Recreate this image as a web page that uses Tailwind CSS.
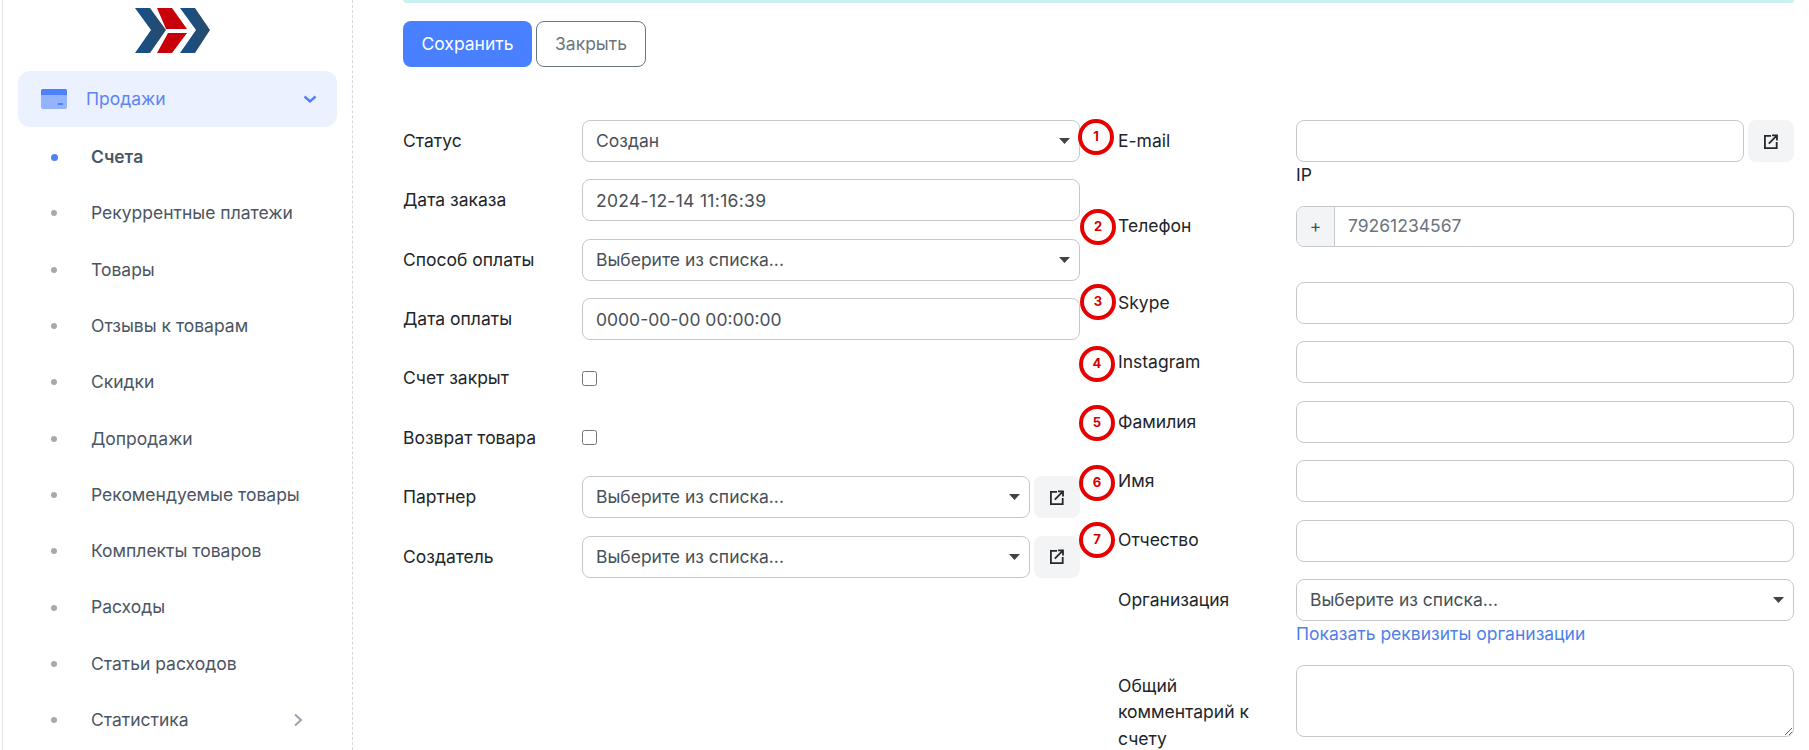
<!DOCTYPE html>
<html lang="ru">
<head>
    <meta charset="UTF-8">
    <title>Счет</title>
    <script src="https://cdn.jsdelivr.net/npm/@tailwindcss/browser@4"></script>
</head>
<body class="bg-white font-['Inter',sans-serif] text-[17.5px] text-[#212529] h-[750px] overflow-hidden relative">

<div class="flex h-[750px]">
    <!-- sidebar -->
    <aside class="w-[351px] shrink-0 h-full ml-[2px] border-l border-l-[#e4e4e4] border-r border-r-[#d5d8dc] border-dashed [border-left-style:solid] overflow-hidden">
        <div class="h-[71px] pl-[132px] pt-[8px]">
            <svg width="76" height="46" viewBox="0 0 76 46">
                <defs>
                    <linearGradient id="blue1" x1="0" x2="1" y1="0" y2="0">
                        <stop offset="0" stop-color="#12518f"></stop>
                        <stop offset="1" stop-color="#2b4a66"></stop>
                    </linearGradient>
                </defs>
                <polygon points="0,0 15,0 31,22 15,45 0,45 16,22" fill="url(#blue1)"></polygon>
                <polygon points="22,0 37,0 52,21 31,21" fill="#c8000a"></polygon>
                <polygon points="33,25 52,25 37,45 22,45" fill="#c8000a"></polygon>
                <polygon points="45,0 60,0 75,22 60,45 45,45 61,22" fill="url(#blue1)"></polygon>
            </svg>
        </div>
        <nav class="text-[#4b5563]">
            <div class="mx-[15px] h-[56px] rounded-[12px] bg-[#ebf1fe] flex items-center pl-[23px] pr-[20px] text-[#5c85f2]">
                <svg width="26" height="20" viewBox="0 0 26 20" class="mr-[19px]">
                    <rect width="26" height="20" rx="2" fill="#94b3fd"></rect>
                    <path d="M0 2a2 2 0 0 1 2-2h22a2 2 0 0 1 2 2v4H0z" fill="#4f80fb"></path>
                    <rect x="17" y="14" width="5" height="2" fill="#4f80fb"></rect>
                </svg>
                <span>Продажи</span>
                <svg width="14" height="10" viewBox="0 0 14 10" class="ml-auto" fill="none" stroke="#4f80fb" stroke-width="2.4">
                    <path d="M1.5 2.5 7 7.5l5.5-5"></path>
                </svg>
            </div>
            <ul class="mt-[2px]">
                <li class="h-[56.3px] flex items-center pl-[48px]"><span class="size-[7px] rounded-full bg-[#4f80fb] mr-[33px]"></span><span class="font-semibold">Счета</span></li>
                <li class="h-[56.3px] flex items-center pl-[48px]"><span class="size-[6px] rounded-full bg-[#a5a9b0] mr-[34px]"></span>Рекуррентные платежи</li>
                <li class="h-[56.3px] flex items-center pl-[48px]"><span class="size-[6px] rounded-full bg-[#a5a9b0] mr-[34px]"></span>Товары</li>
                <li class="h-[56.3px] flex items-center pl-[48px]"><span class="size-[6px] rounded-full bg-[#a5a9b0] mr-[34px]"></span>Отзывы к товарам</li>
                <li class="h-[56.3px] flex items-center pl-[48px]"><span class="size-[6px] rounded-full bg-[#a5a9b0] mr-[34px]"></span>Скидки</li>
                <li class="h-[56.3px] flex items-center pl-[48px]"><span class="size-[6px] rounded-full bg-[#a5a9b0] mr-[34px]"></span>Допродажи</li>
                <li class="h-[56.3px] flex items-center pl-[48px]"><span class="size-[6px] rounded-full bg-[#a5a9b0] mr-[34px]"></span>Рекомендуемые товары</li>
                <li class="h-[56.3px] flex items-center pl-[48px]"><span class="size-[6px] rounded-full bg-[#a5a9b0] mr-[34px]"></span>Комплекты товаров</li>
                <li class="h-[56.3px] flex items-center pl-[48px]"><span class="size-[6px] rounded-full bg-[#a5a9b0] mr-[34px]"></span>Расходы</li>
                <li class="h-[56.3px] flex items-center pl-[48px]"><span class="size-[6px] rounded-full bg-[#a5a9b0] mr-[34px]"></span>Статьи расходов</li>
                <li class="h-[56.3px] flex items-center pl-[48px] pr-[49px]"><span class="size-[6px] rounded-full bg-[#a5a9b0] mr-[34px]"></span>Статистика
                    <svg width="10" height="14" viewBox="0 0 10 14" class="ml-auto" fill="none" stroke="#9ca3af" stroke-width="2"><path d="M2 1.5 8 7l-6 5.5"></path></svg>
                </li>
            </ul>
        </nav>
    </aside>

    <!-- content -->
    <main class="flex-1 pl-[50px] pr-[15px]">
        <div class="h-[3px] bg-[#c9f1f1] rounded-b-md"></div>
        <div class="flex gap-[4px] mt-[18px]">
            <button class="h-[46px] w-[129px] rounded-[8px] bg-[#4880ff] text-white">Сохранить</button>
            <button class="h-[46px] w-[110px] rounded-[8px] border border-[#6c757d] text-[#6c757d]">Закрыть</button>
        </div>

        <div class="flex mt-[53px]">
            <!-- left column -->
            <div class="w-[677px] shrink-0">
                <div class="flex items-center h-[42px] mb-[17.4px]">
                    <label class="w-[179px] shrink-0">Статус</label>
                    <div class="relative w-[498px]">
                        <select class="appearance-none w-full h-[42px] px-[13px] border border-[#c4c8cc] rounded-[8px] text-[#495057] bg-white"><option>Создан</option></select>
                        <svg width="11" height="6" viewBox="0 0 11 6" class="absolute right-[10px] top-[18px]"><path d="M0 0h11L5.5 6z" fill="#3f4448"></path></svg>
                    </div>
                </div>
                <div class="flex items-center h-[42px] mb-[17.4px]">
                    <label class="w-[179px] shrink-0">Дата заказа</label>
                    <input value="2024-12-14 11:16:39" class="w-[498px] h-[42px] px-[13px] border border-[#c4c8cc] rounded-[8px] text-[#495057] tracking-[0.3px]">
                </div>
                <div class="flex items-center h-[42px] mb-[17.4px]">
                    <label class="w-[179px] shrink-0">Способ оплаты</label>
                    <div class="relative w-[498px]">
                        <select class="appearance-none w-full h-[42px] px-[13px] border border-[#c4c8cc] rounded-[8px] text-[#495057] bg-white"><option>Выберите из списка...</option></select>
                        <svg width="11" height="6" viewBox="0 0 11 6" class="absolute right-[10px] top-[18px]"><path d="M0 0h11L5.5 6z" fill="#3f4448"></path></svg>
                    </div>
                </div>
                <div class="flex items-center h-[42px] mb-[17.4px]">
                    <label class="w-[179px] shrink-0">Дата оплаты</label>
                    <input value="0000-00-00 00:00:00" class="w-[498px] h-[42px] px-[13px] border border-[#c4c8cc] rounded-[8px] text-[#495057]">
                </div>
                <div class="flex items-center h-[42px] mb-[17.4px]">
                    <label class="w-[179px] shrink-0">Счет закрыт</label>
                    <input type="checkbox" class="size-[15px] m-0">
                </div>
                <div class="flex items-center h-[42px] mb-[17.4px]">
                    <label class="w-[179px] shrink-0">Возврат товара</label>
                    <input type="checkbox" class="size-[15px] m-0">
                </div>
                <div class="flex items-center h-[42px] mb-[17.4px]">
                    <label class="w-[179px] shrink-0">Партнер</label>
                    <div class="relative w-[448px]">
                        <select class="appearance-none w-full h-[42px] px-[13px] border border-[#c4c8cc] rounded-[8px] text-[#495057] bg-white"><option>Выберите из списка...</option></select>
                        <svg width="11" height="6" viewBox="0 0 11 6" class="absolute right-[10px] top-[18px]"><path d="M0 0h11L5.5 6z" fill="#3f4448"></path></svg>
                    </div>
                    <button class="ml-[4px] w-[46px] h-[42px] rounded-[8px] bg-[#f3f4f6] flex items-center justify-center">
                        <svg width="14" height="15" viewBox="0 0 14 15" fill="none" stroke="#26292c" stroke-width="1.8"><path d="M7 1.9H.9v12.2h11.8V8M4.8 9.6 12 2.4M8 1.4h5v5"></path></svg>
                    </button>
                </div>
                <div class="flex items-center h-[42px]">
                    <label class="w-[179px] shrink-0">Создатель</label>
                    <div class="relative w-[448px]">
                        <select class="appearance-none w-full h-[42px] px-[13px] border border-[#c4c8cc] rounded-[8px] text-[#495057] bg-white"><option>Выберите из списка...</option></select>
                        <svg width="11" height="6" viewBox="0 0 11 6" class="absolute right-[10px] top-[18px]"><path d="M0 0h11L5.5 6z" fill="#3f4448"></path></svg>
                    </div>
                    <button class="ml-[4px] w-[46px] h-[42px] rounded-[8px] bg-[#f3f4f6] flex items-center justify-center">
                        <svg width="14" height="15" viewBox="0 0 14 15" fill="none" stroke="#26292c" stroke-width="1.8"><path d="M7 1.9H.9v12.2h11.8V8M4.8 9.6 12 2.4M8 1.4h5v5"></path></svg>
                    </button>
                </div>
            </div>

            <!-- right column -->
            <div class="flex-1 ml-[38px]">
                <div class="flex items-center h-[42px]">
                    <label class="w-[178px] shrink-0">E-mail</label>
                    <input class="w-[448px] h-[42px] border border-[#c4c8cc] rounded-[8px]">
                    <button class="ml-[4px] w-[46px] h-[42px] rounded-[8px] bg-[#f3f4f6] flex items-center justify-center">
                        <svg width="14" height="15" viewBox="0 0 14 15" fill="none" stroke="#26292c" stroke-width="1.8"><path d="M7 1.9H.9v12.2h11.8V8M4.8 9.6 12 2.4M8 1.4h5v5"></path></svg>
                    </button>
                </div>
                <div class="pl-[178px] h-[26px] leading-[26px] mb-[18px]">IP</div>

                <div class="flex items-center h-[41px] mb-[35px]">
                    <label class="w-[178px] shrink-0">Телефон</label>
                    <div class="flex-1 flex h-[41px] border border-[#c4c8cc] rounded-[8px] overflow-hidden">
                        <span class="w-[38px] bg-[#f3f4f6] border-r border-[#c4c8cc] flex items-center justify-center text-[#495057]">+</span>
                        <input placeholder="79261234567" class="flex-1 px-[13px] placeholder:text-[#6c757d]">
                    </div>
                </div>

                <div class="flex items-center h-[42px] mb-[17.4px]">
                    <label class="w-[178px] shrink-0">Skype</label>
                    <input class="flex-1 h-[42px] border border-[#c4c8cc] rounded-[8px]">
                </div>
                <div class="flex items-center h-[42px] mb-[17.4px]">
                    <label class="w-[178px] shrink-0">Instagram</label>
                    <input class="flex-1 h-[42px] border border-[#c4c8cc] rounded-[8px]">
                </div>
                <div class="flex items-center h-[42px] mb-[17.4px]">
                    <label class="w-[178px] shrink-0">Фамилия</label>
                    <input class="flex-1 h-[42px] border border-[#c4c8cc] rounded-[8px]">
                </div>
                <div class="flex items-center h-[42px] mb-[17.4px]">
                    <label class="w-[178px] shrink-0">Имя</label>
                    <input class="flex-1 h-[42px] border border-[#c4c8cc] rounded-[8px]">
                </div>
                <div class="flex items-center h-[42px] mb-[17.4px]">
                    <label class="w-[178px] shrink-0">Отчество</label>
                    <input class="flex-1 h-[42px] border border-[#c4c8cc] rounded-[8px]">
                </div>
                <div class="flex items-center h-[42px]">
                    <label class="w-[178px] shrink-0">Организация</label>
                    <div class="relative flex-1">
                        <select class="appearance-none w-full h-[42px] px-[13px] border border-[#c4c8cc] rounded-[8px] text-[#495057] bg-white"><option>Выберите из списка...</option></select>
                        <svg width="11" height="6" viewBox="0 0 11 6" class="absolute right-[10px] top-[18px]"><path d="M0 0h11L5.5 6z" fill="#3f4448"></path></svg>
                    </div>
                </div>
                <div class="pl-[178px] h-[26px] leading-[26px] mb-[18px] text-[#4f7fe8]">Показать реквизиты организации</div>
                <div class="flex">
                    <label class="w-[178px] shrink-0 pr-[20px] pt-[8px] leading-[26.3px]">Общий комментарий к счету</label>
                    <textarea class="flex-1 h-[72px] border border-[#c4c8cc] rounded-[8px]"></textarea>
                </div>
            </div>
        </div>
    </main>
</div>

<!-- red annotation circles drawn over the form -->
<div class="absolute left-[1078px] top-[119px] size-[36px] rounded-full border-[4px] border-[#e60000] flex items-center justify-center text-[13px] font-bold text-[#d40000]">1</div>
<div class="absolute left-[1080px] top-[209px] size-[36px] rounded-full border-[4px] border-[#e60000] flex items-center justify-center text-[13px] font-bold text-[#d40000]">2</div>
<div class="absolute left-[1080px] top-[284px] size-[36px] rounded-full border-[4px] border-[#e60000] flex items-center justify-center text-[13px] font-bold text-[#d40000]">3</div>
<div class="absolute left-[1079px] top-[346px] size-[36px] rounded-full border-[4px] border-[#e60000] flex items-center justify-center text-[13px] font-bold text-[#d40000]">4</div>
<div class="absolute left-[1079px] top-[405px] size-[36px] rounded-full border-[4px] border-[#e60000] flex items-center justify-center text-[13px] font-bold text-[#d40000]">5</div>
<div class="absolute left-[1079px] top-[465px] size-[36px] rounded-full border-[4px] border-[#e60000] flex items-center justify-center text-[13px] font-bold text-[#d40000]">6</div>
<div class="absolute left-[1079px] top-[522px] size-[36px] rounded-full border-[4px] border-[#e60000] flex items-center justify-center text-[13px] font-bold text-[#d40000]">7</div>

</body>
</html>
